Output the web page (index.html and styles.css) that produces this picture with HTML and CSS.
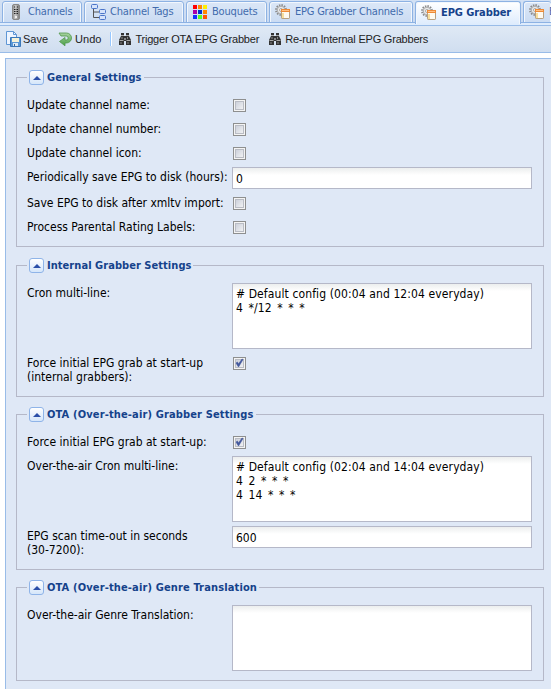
FILE: index.html
```html
<!DOCTYPE html>
<html lang="en">
<head>
<meta charset="utf-8">
<title>EPG Grabber</title>
<link rel="stylesheet" href="styles.css">
</head>
<body>
<svg class="defs" width="0" height="0">
  <defs>
    <linearGradient id="undo-fill" x1="0" y1="0" x2="0" y2="1"><stop offset="0" stop-color="#a9d3a2"/><stop offset="1" stop-color="#4aa046"/></linearGradient>
    <linearGradient id="remote-fill" x1="0" y1="0" x2="1" y2="0"><stop offset="0" stop-color="#8a8a8a"/><stop offset=".4" stop-color="#c8c8c8"/><stop offset="1" stop-color="#777"/></linearGradient>
  </defs>
  <symbol id="gear-window" viewBox="0 0 16 16">
    <circle cx="6" cy="6" r="5" fill="none" stroke="#8b8b8b" stroke-width="1.800" stroke-dasharray="1.5 1.1"/>
    <circle cx="6" cy="6" r="3.800" fill="#e9e9e9" stroke="#999" stroke-width=".8"/>
    <circle cx="6" cy="6" r="1.500" fill="#fff" stroke="#999" stroke-width=".8"/>
    <rect x="6.500" y="5.500" width="8" height="9" rx=".6" fill="#fffaf0" stroke="#b8a080"/>
    <path d="M6 5h9v3H6z" fill="#ef8a35"/><path d="M7 6h7v1H7z" fill="#ffc184"/>
    <path d="M7 9h2v5H7z" fill="#f7de9c"/>
  </symbol>
  <symbol id="binoculars" viewBox="0 0 14 14">
    <path d="M3 1h3v3h2V1h3v3l2 4v5H8V9H6v4H1V8l2-4z" fill="#333"/>
    <path d="M3 3.500h3M8 3.500h3M1.500 8.500h4M8.500 8.500h4" stroke="#aaa"/>
    <path d="M3 10v2M10 10v2M4 5v2M9.500 5v2" stroke="#888"/>
    <path d="M6 6h2v2H6z" fill="#888"/>
  </symbol>
  <symbol id="tick" viewBox="0 0 13 13">
    <path d="M3 6l2.500 4L10 2.500 9 2 5.500 7 4.500 5z" fill="#42579c" stroke="#42579c" stroke-width=".6"/>
  </symbol>
</svg>

<nav class="tabs">
  <a class="tab tab-channels">
    <svg width="16" height="16" viewBox="0 0 16 16"><rect x="4.500" y=".5" width="7" height="15" rx="1.500" fill="url(#remote-fill)" stroke="#888"/><path d="M6 3h1M9 3h1M6 5.500h1M7.500 5.500h1M9 5.500h1M6 7.500h1M7.500 7.500h1M9 7.500h1M6 9.500h1M7.500 9.500h1M9 9.500h1" stroke="#222"/><path d="M7 12h2v2H7z" fill="#eee"/></svg>
    <span>Channels</span></a>
  <a class="tab tab-tags">
    <svg width="16" height="16" viewBox="0 0 16 16"><path d="M3.500 4v9.500H9M3.500 8H9" fill="none" stroke="#555"/><g fill="#d5e3fb" stroke="#4b75c9"><rect x="1.500" y=".5" width="6" height="4" rx="1"/><rect x="9.500" y="5.500" width="6" height="4" rx="1"/><rect x="9.500" y="11.500" width="6" height="4" rx="1"/></g></svg>
    <span>Channel Tags</span></a>
  <a class="tab tab-bouquets">
    <svg width="16" height="16" viewBox="0 0 16 16"><path fill="#f00" d="M1 1h4v4H1z"/><path fill="#f80" d="M6 1h4v4H6zM11 6h4v4h-4z"/><path fill="#fe0" d="M11 1h4v4h-4z"/><path fill="#a0a" d="M1 6h4v4H1z"/><path fill="#03c" d="M6 6h4v4H6z"/><path fill="#13f" d="M1 11h4v4H1z"/><path fill="#5f2" d="M6 11h4v4H6z"/><path fill="#f50" d="M11 11h4v4h-4z"/></svg>
    <span>Bouquets</span></a>
  <a class="tab tab-epg-channels"><svg width="16" height="16"><use href="#gear-window"/></svg><span>EPG Grabber Channels</span></a>
  <a class="tab tab-active"><svg width="16" height="16"><use href="#gear-window"/></svg><span>EPG Grabber</span></a>
  <a class="tab tab-next"><svg width="16" height="16"><use href="#gear-window"/></svg><span>E</span></a>
</nav>

<div class="toolbar">
  <button class="tool tool-save">
    <svg width="16" height="16" viewBox="0 0 16 16"><path d="M1.500.5h7l3 3v10h-10z" fill="#eef5ff" stroke="#5f97d5"/><path d="M8.500.5v3h3" fill="none" stroke="#5f97d5"/><path d="M5.500 6.500h10v9h-10z" fill="#5b98d6" stroke="#3a77b8"/><path d="M7 7h7v4H7z" fill="#f5f2d8"/><path d="M8 12h5v3H8z" fill="#dceaf7"/><path d="M9 13h1v2H9z" fill="#36679b"/></svg>
    <span>Save</span></button>
  <button class="tool tool-undo">
    <svg width="16" height="16" viewBox="0 0 16 16"><path d="M2 2h7.500a5 5 0 0 1 0 10H8v2.800L2.500 10.500 8 6.500V9h1.200a2 2 0 0 0 0-4H4z" fill="url(#undo-fill)" stroke="#50984d" stroke-width=".8"/></svg>
    <span>Undo</span></button>
  <i class="separator"></i>
  <button class="tool tool-trigger"><svg width="14" height="14"><use href="#binoculars"/></svg><span>Trigger OTA EPG Grabber</span></button>
  <button class="tool tool-rerun"><svg width="14" height="14"><use href="#binoculars"/></svg><span>Re-run Internal EPG Grabbers</span></button>
</div>

<main class="workspace">
  <form class="panel">
    <fieldset class="group group-general">
      <legend><i class="toggle"></i><span>General Settings</span></legend>
      <div class="row"><label>Update channel name:</label><i class="check"></i></div>
      <div class="row"><label>Update channel number:</label><i class="check"></i></div>
      <div class="row"><label>Update channel icon:</label><i class="check"></i></div>
      <div class="row row-input"><label>Periodically save EPG to disk (hours):</label><div class="field">0</div></div>
      <div class="row"><label>Save EPG to disk after xmltv import:</label><i class="check"></i></div>
      <div class="row"><label>Process Parental Rating Labels:</label><i class="check"></i></div>
    </fieldset>
    <fieldset class="group">
      <legend><i class="toggle"></i><span>Internal Grabber Settings</span></legend>
      <div class="row row-area"><label>Cron multi-line:</label><div class="field area"># Default config (00:04 and 12:04 everyday)
<span class="cron">4 */12 * * *</span></div></div>
      <div class="row row-double"><label>Force initial EPG grab at start-up<br>(internal grabbers):</label><i class="check"><svg width="13" height="13"><use href="#tick"/></svg></i></div>
    </fieldset>
    <fieldset class="group group-ota">
      <legend><i class="toggle"></i><span>OTA (Over-the-air) Grabber Settings</span></legend>
      <div class="row"><label>Force initial EPG grab at start-up:</label><i class="check"><svg width="13" height="13"><use href="#tick"/></svg></i></div>
      <div class="row row-area"><label>Over-the-air Cron multi-line:</label><div class="field area"># Default config (02:04 and 14:04 everyday)
<span class="cron">4 2 * * *
4 14 * * *</span></div></div>
      <div class="row row-double"><label>EPG scan time-out in seconds<br>(30-7200):</label><div class="field">600</div></div>
    </fieldset>
    <fieldset class="group group-ota">
      <legend><i class="toggle"></i><span>OTA (Over-the-air) Genre Translation</span></legend>
      <div class="row row-area"><label>Over-the-air Genre Translation:</label><div class="field area"></div></div>
    </fieldset>
  </form>
</main>
</body>
</html>
```

FILE: styles.css
```css
* { box-sizing: border-box; }

body {
  margin: 0;
  width: 551px;
  height: 689px;
  overflow: hidden;
  display: flex;
  flex-direction: column;
  background: #fff;
  font: 12px/14px "DejaVu Sans Condensed", "DejaVu Sans", sans-serif;
  color: #000;
}

svg { display: block; flex: none; }
.defs { position: absolute; }

.tabs {
  flex: none;
  display: flex;
  gap: 2px;
  height: 26px;
  padding: 1px 0 3px 2px;
  overflow: hidden;
  background: linear-gradient(#d3e1f4, #c9daf2) 0 0 / 100% 22px no-repeat, #dbe7f8;
  border-bottom: 1px solid #99bce8;
  box-shadow: inset 0 -2px #deecfd, inset 0 -3px #8db2e3;
}

.tab {
  flex: none;
  display: flex;
  align-items: center;
  gap: 4px;
  height: 22px;
  padding: 0 0 0 5px;
  border: 1px solid #8db2e3;
  border-radius: 3px 3px 0 0;
  background: linear-gradient(#dbe7f7, #cbdcf3);
  box-shadow: inset 1px 1px #f2f7fd, inset -1px 0 #f2f7fd;
  color: #416bad;
  font-size: 11px;
  letter-spacing: -0.17px;
  white-space: nowrap;
}
.tab-channels { width: 80px; }
.tab-tags { width: 100px; }
.tab-bouquets { width: 81px; }
.tab-epg-channels { width: 144px; letter-spacing: -0.22px; }
.tab-active {
  width: 106px;
  height: 23px;
  border-bottom: 0;
  background: linear-gradient(#fff, #deecfd);
  color: #15428b;
  font-weight: bold;
  letter-spacing: -0.08px;
}
.tab-next { width: 28px; border-right: 0; overflow: hidden; }

.toolbar {
  flex: none;
  display: flex;
  align-items: center;
  height: 27px;
  padding-left: 5px;
  background: linear-gradient(#dfe9f5, #d0def0);
  border-bottom: 1px solid #99bce8;
  font: 11px/14px "Liberation Sans", sans-serif;
}
.tool {
  display: flex;
  align-items: center;
  gap: 2px;
  padding: 0;
  border: 0;
  background: none;
  color: #222;
  font: inherit;
  white-space: nowrap;
}
.tool-undo { margin-left: 9px; }
.separator { width: 2px; height: 14px; margin: 0 7px 0 9px; border-left: 1px solid #98c8ff; border-right: 1px solid #fff; }
.tool-trigger, .tool-rerun { letter-spacing: -0.2px; }
.tool-trigger { gap: 3px; margin-left: -1px; }
.tool-rerun { gap: 3px; margin-left: 9px; }

.workspace { flex: 1; padding: 5px 0 0 5px; }

.panel {
  height: 640px;
  margin: 0;
  padding: 11px 7px 0 10px;
  border-left: 1px solid #99bce8;
  border-top: 1px solid #99bce8;
  background: #dfe8f6;
}

.group {
  min-width: 0;
  margin: 0 0 10px;
  padding: 9px 0 6px 10px;
  border: 1px solid #b5b8c8;
}
.group-general { margin-bottom: 11px; }

legend {
  display: flex;
  align-items: center;
  gap: 3px;
  height: 15px;
  padding: 0 2px;
  color: #15428b;
  font-size: 11px;
  font-weight: bold;
  letter-spacing: 0.05px;
}
.group-ota legend { letter-spacing: 0.14px; }

.toggle {
  display: grid;
  place-items: center;
  width: 15px;
  height: 15px;
  border: 1px solid #8fb4e8;
  border-radius: 3px;
  background: linear-gradient(#fff, #d5e6fa);
}
.toggle::before {
  content: "";
  border: 4px solid transparent;
  border-top: 0;
  border-bottom: 4px solid #2b4fa8;
}

.row {
  display: grid;
  grid-template-columns: 205px 300px;
  align-items: start;
  height: 24px;
}
.row-input { height: 26px; }
.row-area { height: 70px; }
.row-double { height: 38px; }

label { padding-top: 4px; white-space: nowrap; }

.check {
  width: 13px;
  height: 13px;
  margin: 5px 0 0 1px;
  border: 1px solid #8e8f8f;
  background: linear-gradient(135deg, #c3c8d4, #fafafa);
  box-shadow: inset 0 0 0 1px #f4f4f4, inset 0 0 0 2px #b9bcc4;
}
.check svg { margin: -1px; }

.field {
  height: 22px;
  margin-top: 1px;
  padding: 4px 3px 0;
  border: 1px solid #b5b8c8;
  background: linear-gradient(#eceeee, #fff 7px);
  white-space: pre;
}
.area { height: 66px; padding-top: 3px; letter-spacing: 0.11px; }
.cron { word-spacing: 2px; }
```
